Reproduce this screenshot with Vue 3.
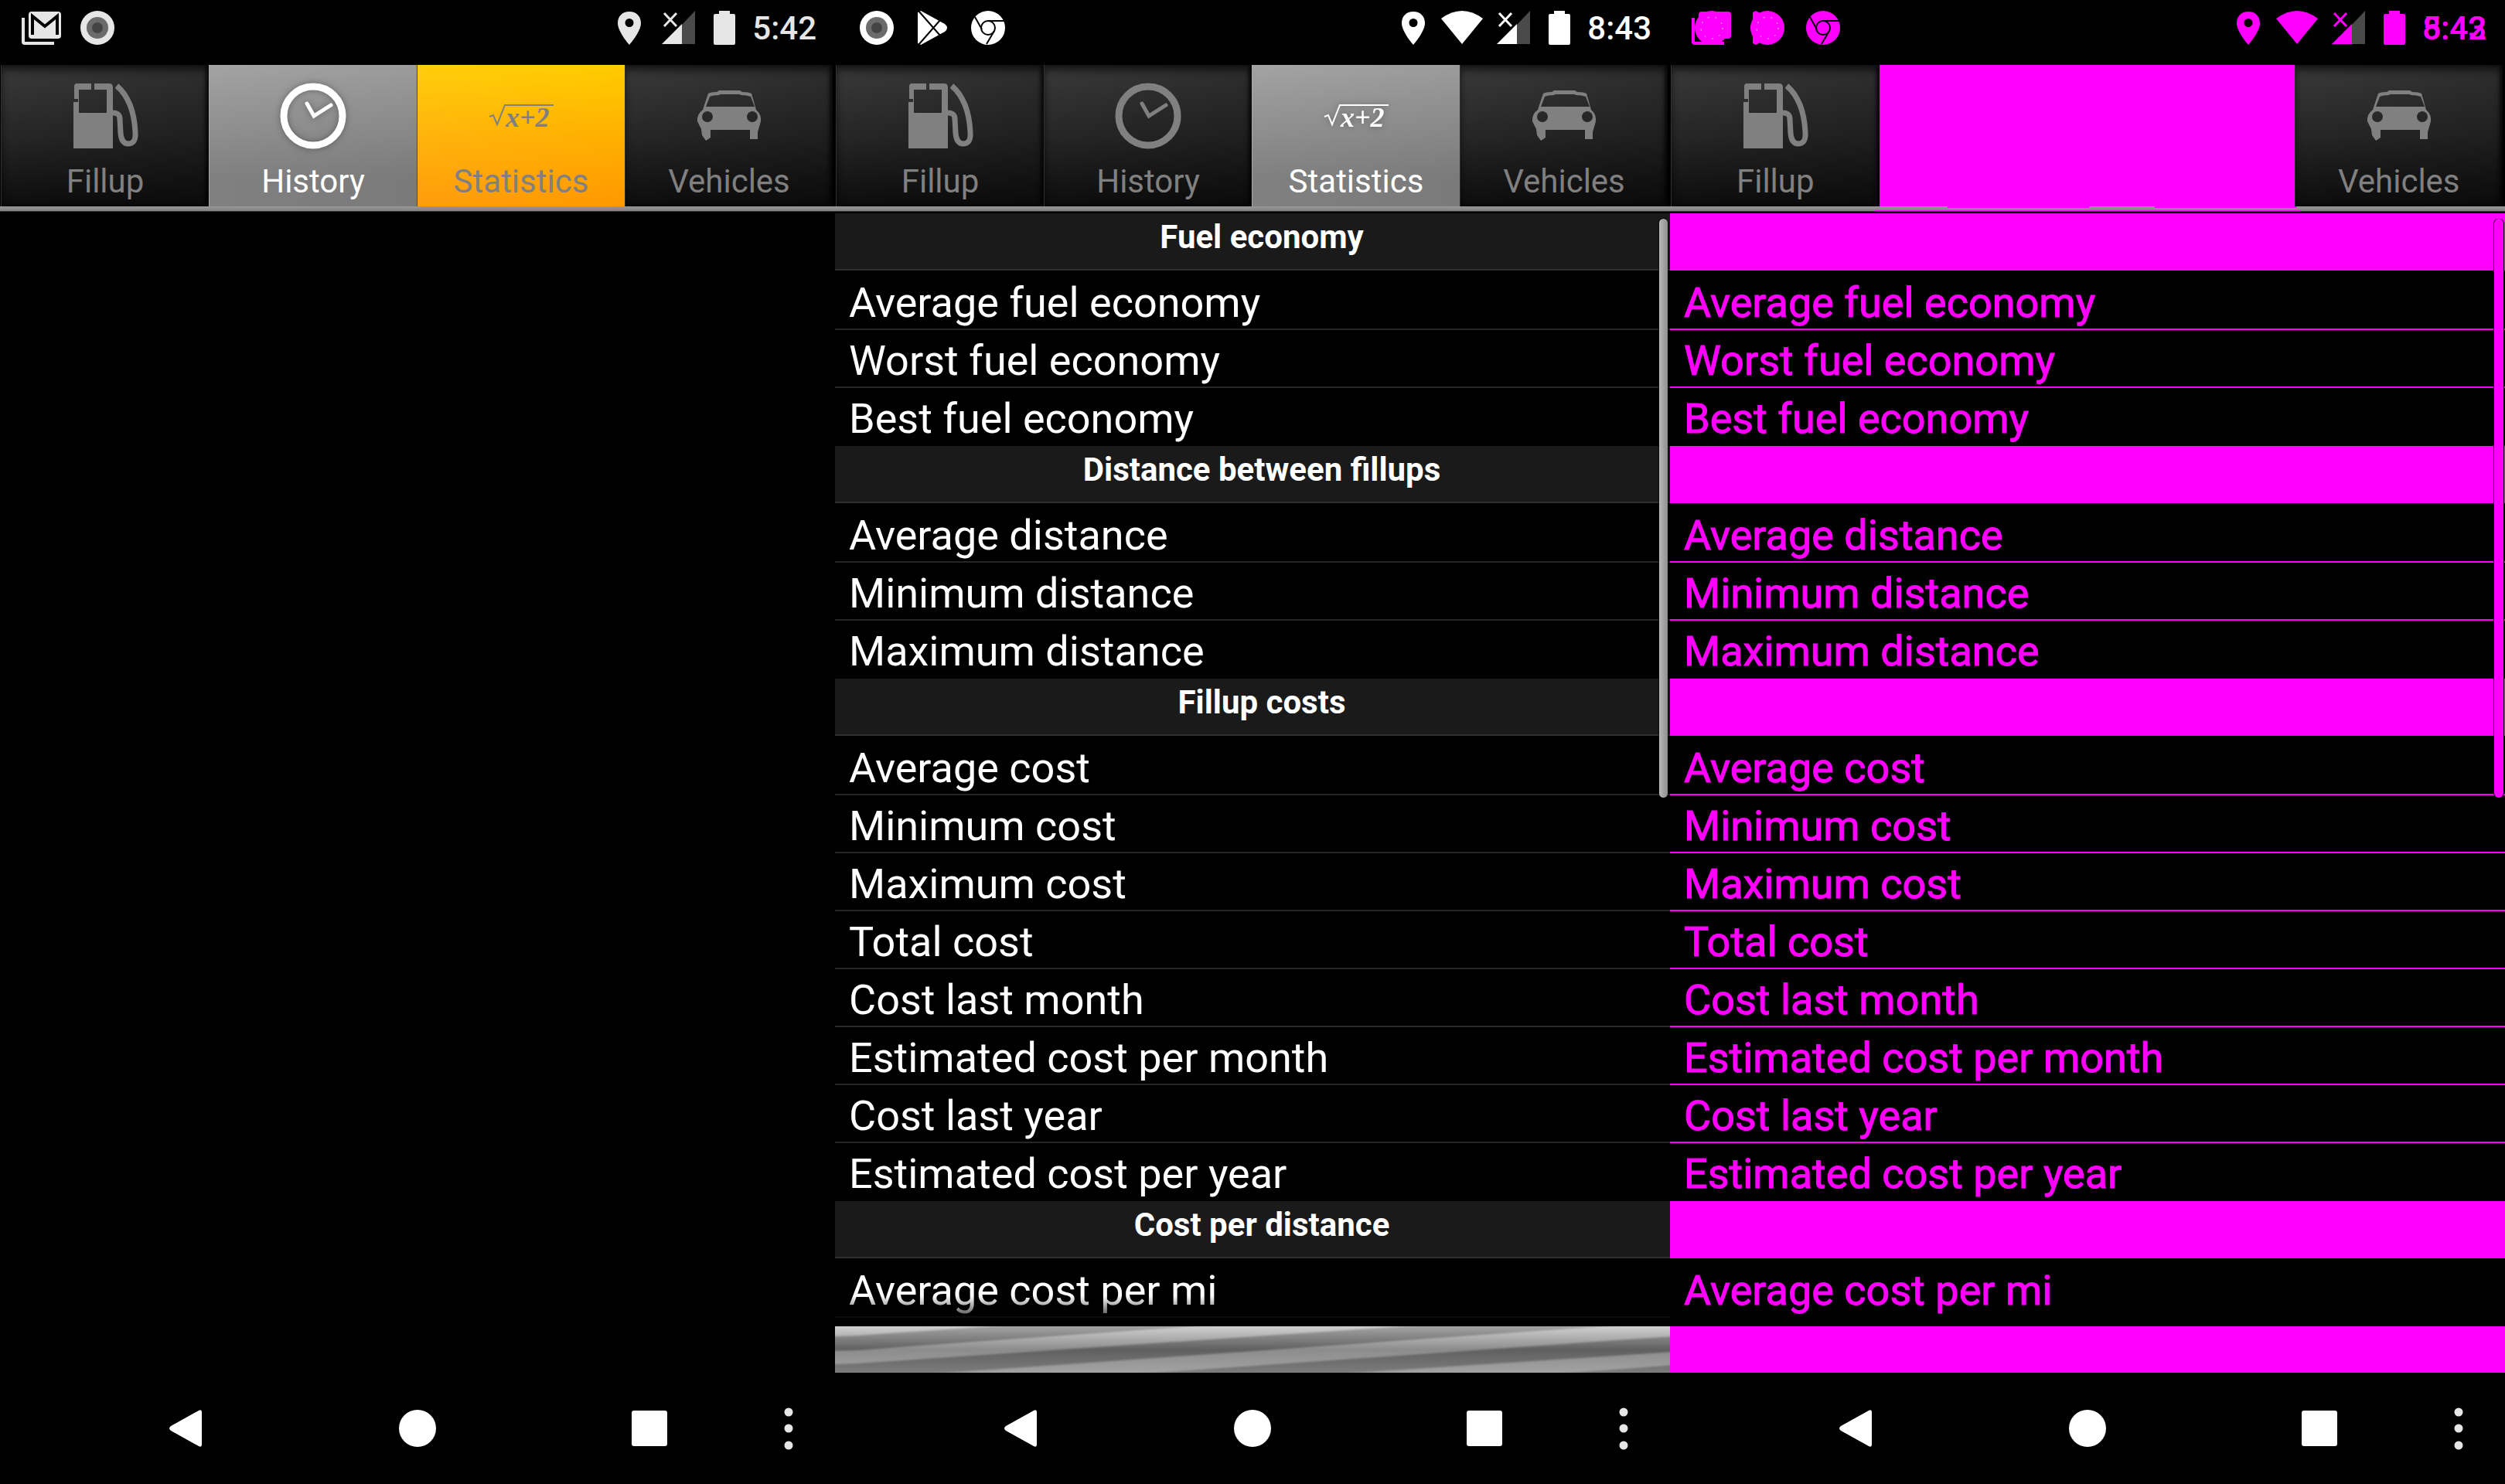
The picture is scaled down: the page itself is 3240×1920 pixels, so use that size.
<script setup>
const groups = [
  { title: 'Fuel economy', rows: ['Average fuel economy', 'Worst fuel economy', 'Best fuel economy'] },
  { title: 'Distance between fillups', rows: ['Average distance', 'Minimum distance', 'Maximum distance'] },
  {
    title: 'Fillup costs',
    rows: [
      'Average cost',
      'Minimum cost',
      'Maximum cost',
      'Total cost',
      'Cost last month',
      'Estimated cost per month',
      'Cost last year',
      'Estimated cost per year',
    ],
  },
  { title: 'Cost per distance', rows: ['Average cost per mi'] },
]

const phones = [
  {
    id: 'before',
    notices: [['mail'], ['record']],
    wifi: false,
    clocks: ['5:42'],
    tabs: { Fillup: '', History: 'active', Statistics: 'pressed', Vehicles: '' },
    groups: [],
  },
  {
    id: 'after',
    notices: [['record'], ['play'], ['chrome']],
    wifi: true,
    clocks: ['8:43'],
    tabs: { Fillup: '', History: '', Statistics: 'active', Vehicles: '' },
    groups,
  },
  {
    id: 'diff',
    notices: [['mail', 'record'], ['play', 'record'], ['chrome']],
    wifi: true,
    clocks: ['5:42', '8:43'],
    tabs: { Fillup: '', changed: 'changed', Vehicles: '' },
    groups,
  },
]
</script>

<template>
  <main class="board">
    <section v-for="phone in phones" :key="phone.id" class="phone" :class="phone.id">
      <header class="status">
        <div class="notices">
          <span v-for="(stack, i) in phone.notices" :key="i" class="notice">
            <svg v-for="name in stack" :key="name" class="glyph" :class="name" viewBox="0 0 44 44" aria-hidden="true">
              <template v-if="name === 'mail'">
                <path class="ink" d="M-4 9h4v31h38v4H0q-4 0-4-4z" />
                <rect class="ink" x="5" y="1" width="42" height="35" rx="4" />
                <path class="cut" d="M10 31V7l16 13L42 7v24" />
              </template>
              <template v-else-if="name === 'record'">
                <circle class="ink" cx="22" cy="22" r="22" />
                <circle class="mid" cx="22" cy="22" r="14" />
                <circle class="core" cx="22" cy="22" r="7" />
              </template>
              <template v-else-if="name === 'play'">
                <path class="ink" d="M3 2L7 0l31 17q6 5 0 10L7 44l-4-2z" />
                <path class="cut thin" d="M4 0l28 32M4 44l28-32" />
              </template>
              <template v-else>
                <circle class="ink" cx="22" cy="22" r="22" />
                <path class="cut thin" d="M22 13h21M5 8l9 16M30 26L20 43" />
                <circle class="cut thin" cx="22" cy="22" r="9" />
              </template>
            </svg>
          </span>
        </div>
        <div class="system">
          <svg class="place" viewBox="0 0 36 44" aria-hidden="true">
            <path class="ink" fill-rule="evenodd" d="M18 1C9 1 3 7 3 16c0 11 15 28 15 28s15-17 15-28C33 7 27 1 18 1zm0 9a5 5 0 1 1 0 11 5 5 0 0 1 0-11z" />
          </svg>
          <svg v-if="phone.wifi" class="wifi" viewBox="0 0 42 44" aria-hidden="true">
            <path class="ink" d="M-6 10Q21-10 48 10L21 43z" />
          </svg>
          <svg class="signal" viewBox="0 0 43 44" aria-hidden="true">
            <path class="faint" d="M26 18L43 0v43H26z" />
            <path class="ink" d="M0 43l26-26v26z" />
            <path class="cross" d="M3 3l16 17M19 3L3 20" />
          </svg>
          <svg class="battery" viewBox="0 0 28 44" aria-hidden="true">
            <path class="ink" d="M7 0h14v4h5q2 0 2 2v36q0 2-2 2H2q-2 0-2-2V6q0-2 2-2h5z" />
          </svg>
          <span class="clock">
            <time v-for="clock in phone.clocks" :key="clock">{{ clock }}</time>
          </span>
        </div>
      </header>

      <nav class="tabs">
        <template v-for="(state, name) in phone.tabs" :key="name">
          <div v-if="name === 'changed'" class="changed"></div>
          <button v-else type="button" class="tab" :class="state">
            <svg viewBox="0 0 84 84" aria-hidden="true">
              <template v-if="name === 'Fillup'">
                <path class="fill" fill-rule="evenodd" d="M5 0h19v8h4V0h19q5 0 5 5v79H1V24h6v-4H2V4q0-4 3-4zm3 8v30h36V8z" />
                <path class="line" d="M50 38q11-1 11 8l1 18q1 14 10 14 10 0 9-15Q79 22 57 3" />
              </template>
              <template v-else-if="name === 'History'">
                <circle class="line ring" cx="42" cy="42" r="38" />
                <path class="line hand" d="M34 26l9 16 22-14" />
              </template>
              <template v-else-if="name === 'Statistics'">
                <path class="line root" d="M1 43l5-2 5 12 10-25h63" />
                <text x="22" y="56">x+2</text>
              </template>
              <path
                v-else
                class="fill"
                fill-rule="evenodd"
                d="M15 13q3-2 11-2l3-2h27l3 2q9 0 12 2l6 21q7 6 6 15l-4 14v9H69V60H18v10l-6 4-5-7-1-8-5-10q-1-9 7-15zm2 4l-5 13h63l-5-13q-5-2-13-2l-1-1H30l-1 1q-8 0-12 2zM14 36a7 7 0 1 0 0 14 7 7 0 0 0 0-14zm58 0a7 7 0 1 0 0 14 7 7 0 0 0 0-14z"
              />
            </svg>
            <span>{{ name }}</span>
          </button>
        </template>
      </nav>
      <div class="strip"></div>

      <div class="content">
        <section v-for="group in phone.groups" :key="group.title" class="group">
          <h2 v-if="phone.id === 'after'">{{ group.title }}</h2>
          <div v-else class="block"></div>
          <ul>
            <li v-for="row in group.rows" :key="row">{{ row }}</li>
          </ul>
        </section>
        <template v-if="phone.groups.length">
          <div class="fade"></div>
          <div class="scroll"></div>
        </template>
      </div>

      <div v-if="phone.groups.length" class="banner">
        <svg v-if="phone.id === 'after'" viewBox="0 0 1080 60" preserveAspectRatio="none" aria-hidden="true">
          <defs>
            <linearGradient id="sheen" gradientUnits="userSpaceOnUse" x1="0" y1="0" x2="0" y2="60">
              <stop offset="0" stop-color="#d0d0d0" />
              <stop offset=".5" stop-color="#8c8c8c" />
              <stop offset="1" stop-color="#a2a2a2" />
            </linearGradient>
            <linearGradient id="shade" gradientUnits="userSpaceOnUse" x1="0" y1="0" x2="0" y2="60">
              <stop offset="0" stop-color="#a4a4a4" />
              <stop offset=".5" stop-color="#606060" />
              <stop offset="1" stop-color="#7c7c7c" />
            </linearGradient>
            <filter id="soft"><feGaussianBlur stdDeviation="3 1" /></filter>
          </defs>
          <rect width="1080" height="60" fill="url(#sheen)" />
          <g fill="url(#shade)" filter="url(#soft)">
            <path d="M-20 14L30 12 215-1H480L110 25 30 31-20 32z" />
            <path d="M-20 50L30 48 750-1h260L130 61H-20z" />
            <path d="M400 61L1040 16l60-4v20l-60 4-380 25z" />
            <path d="M940 61l160-12v12z" />
          </g>
        </svg>
      </div>

      <footer class="keys">
        <button type="button" aria-label="Back">
          <svg viewBox="0 0 48 48"><path d="M45 3v42q0 4-4 2L5 27q-4-3 0-6L41 1q4-2 4 2z" /></svg>
        </button>
        <button type="button" aria-label="Home">
          <svg viewBox="0 0 48 48"><circle cx="24" cy="24" r="24" /></svg>
        </button>
        <button type="button" aria-label="Recent apps">
          <svg viewBox="0 0 48 48"><rect x="1" y="1" width="46" height="46" rx="3" /></svg>
        </button>
        <button type="button" class="more" aria-label="More options">
          <svg viewBox="0 0 12 54"><circle cx="6" cy="6" r="5.5" /><circle cx="6" cy="27" r="5.5" /><circle cx="6" cy="49" r="5.5" /></svg>
        </button>
      </footer>
    </section>
  </main>
</template>

<style>
body {
  margin: 0;
  background: #000;
}
</style>

<style scoped>
.board {
  display: grid;
  grid-template-columns: repeat(3, minmax(0, 1fr));
  min-height: 100vh;
  background: #000;
  font-family: Roboto, sans-serif;
}
.phone {
  --ink: #fff;
  display: flex;
  flex-direction: column;
  color: #fff;
}
.before {
  --ink: #e6e6e6;
}
.diff {
  --ink: #f0f;
}
svg {
  display: block;
  overflow: visible;
}
button {
  margin: 0;
  padding: 0;
  border: 0;
  background: none;
  font: inherit;
}

/* status bar */
.status {
  display: flex;
  justify-content: space-between;
  height: 70px;
  padding: 14px 24px 0 32px;
  color: var(--ink);
}
.notices {
  display: flex;
  gap: 28px;
}
.notice {
  display: grid;
}
.notice > * {
  grid-area: 1 / 1;
}
.glyph {
  width: 44px;
  height: 44px;
}
.ink {
  fill: var(--ink);
}
.cut {
  fill: none;
  stroke: #000;
  stroke-width: 4;
}
.cut.thin {
  stroke-width: 2;
}
.mid {
  fill: #6b6b6b;
}
.core {
  fill: #444;
}
.diff .mid,
.diff .core {
  fill: #f0f;
}
.diff .mail .cut,
.diff .play .cut {
  display: none;
}
.diff .record .mid {
  stroke: #fbdcfb;
  stroke-width: 1;
  stroke-dasharray: 2 8;
}
.system {
  display: flex;
  gap: 24px;
  height: 44px;
}
.system svg {
  height: 44px;
}
.place {
  width: 36px;
}
.wifi {
  width: 42px;
}
.signal {
  width: 43px;
}
.battery {
  width: 28px;
}
.faint {
  fill: #4a4a4a;
}
.cross {
  fill: none;
  stroke: var(--ink);
  stroke-width: 3;
}
.clock {
  display: grid;
  margin-left: -2px;
  font-size: 42px;
  font-weight: 500;
  line-height: 46px;
}
.clock time {
  grid-area: 1 / 1;
}

/* tabs */
.tabs {
  display: flex;
  height: 183px;
  padding: 0 3px 0 1px;
}
.tab {
  display: flex;
  flex: 1;
  flex-direction: column;
  align-items: center;
  gap: 18px;
  padding-top: 24px;
  border-left: 1px solid #303030;
  background: linear-gradient(90deg, transparent, #0003), linear-gradient(#3a3a3a, #262626 50%, #0c0c0c);
  box-shadow: inset -4px 0 4px #000a, inset 0 8px 10px #0008;
  color: #808080;
  font-size: 42px;
  line-height: 50px;
}
.tab svg {
  width: 84px;
  height: 84px;
}
.tab.active {
  border-color: #aaa;
  background: linear-gradient(90deg, transparent, #0000000c), linear-gradient(#a3a3a3, #808080 80%, #808080);
  box-shadow: none;
  color: #fff;
}
.tab.active svg {
  filter: drop-shadow(0 0 4px #0005);
}
.tab.pressed {
  border-color: #6b4a00;
  background: linear-gradient(90deg, #ffffff0c, #fff0), linear-gradient(#fc0, #ffb000 50%, #ff9800);
  box-shadow: none;
}
.fill,
.tab text {
  fill: currentColor;
}
.tab text {
  font: italic bold 36px "Liberation Serif", serif;
}
.line {
  fill: none;
  stroke: currentColor;
  stroke-width: 7;
}
.ring {
  stroke-width: 9;
}
.hand {
  stroke-width: 5;
  stroke-linecap: round;
}
.root {
  stroke-width: 2;
}
.changed {
  flex: 2;
  background: #f0f;
}
.strip {
  height: 6px;
  border-bottom: 1px solid #333;
  margin-bottom: 2px;
  background: linear-gradient(#999, #808080);
}
.diff .strip {
  background:
    linear-gradient(#f0f, #f0f) 40% 0 / 17% 2px no-repeat,
    linear-gradient(#f0f, #f0f) 70% 0 / 17% 2px no-repeat,
    linear-gradient(#f0f, #f0f) 50% 100% / 51% 1px no-repeat,
    linear-gradient(#999, #808080);
}

/* statistics list */
.content {
  position: relative;
  flex: 1;
  overflow: hidden;
}
h2,
.block {
  box-sizing: border-box;
  height: 74px;
  margin: 0 0 2px;
  background: #1a1a1a;
}
h2 {
  padding: 6px 0 0 24px;
  border-bottom: 2px solid #303030;
  font-size: 42px;
  font-weight: 700;
  line-height: 49px;
  text-align: center;
}
.block {
  background: #f0f;
}
ul {
  margin: 0;
  padding: 0;
  list-style: none;
}
li {
  padding: 8px 18px 2px;
  border-bottom: 2px solid #262626;
  color: var(--ink);
  font-size: 54px;
  line-height: 63px;
}
.diff li {
  border-color: #f0f;
  -webkit-text-stroke: 1px #f0f;
}
.group .block + ul li:last-child,
.group:not(:nth-child(4)) li:last-child {
  border-color: transparent;
}
.fade {
  position: absolute;
  inset: auto 0 0;
  height: 40px;
  background: linear-gradient(transparent, #000);
}
.diff .fade {
  display: none;
}
.scroll {
  position: absolute;
  top: 7px;
  right: 3px;
  width: 11px;
  height: 52%;
  border-radius: 6px;
  background: linear-gradient(90deg, #b8b8b8, #8f8f8f);
  box-shadow: 0 0 2px 1px #000a;
}
.diff .scroll {
  right: 2px;
  width: 12px;
  background: #f0f;
  box-shadow: -1px 0 #000, 1px 0 #000;
}
.banner {
  height: 60px;
  overflow: hidden;
}
.banner svg {
  width: 100%;
  height: 60px;
}
.diff .banner {
  background: #f0f;
}

/* navigation keys */
.keys {
  display: flex;
  height: 144px;
  padding: 0 30px 0 90px;
}
.keys button {
  display: flex;
  flex: 5;
  align-items: center;
  justify-content: center;
}
.keys svg {
  width: 48px;
  height: 48px;
  fill: #fff;
}
.keys .more {
  flex: 1;
}
.keys .more svg {
  width: 12px;
  height: 54px;
  fill: #e6e6e6;
}
</style>
